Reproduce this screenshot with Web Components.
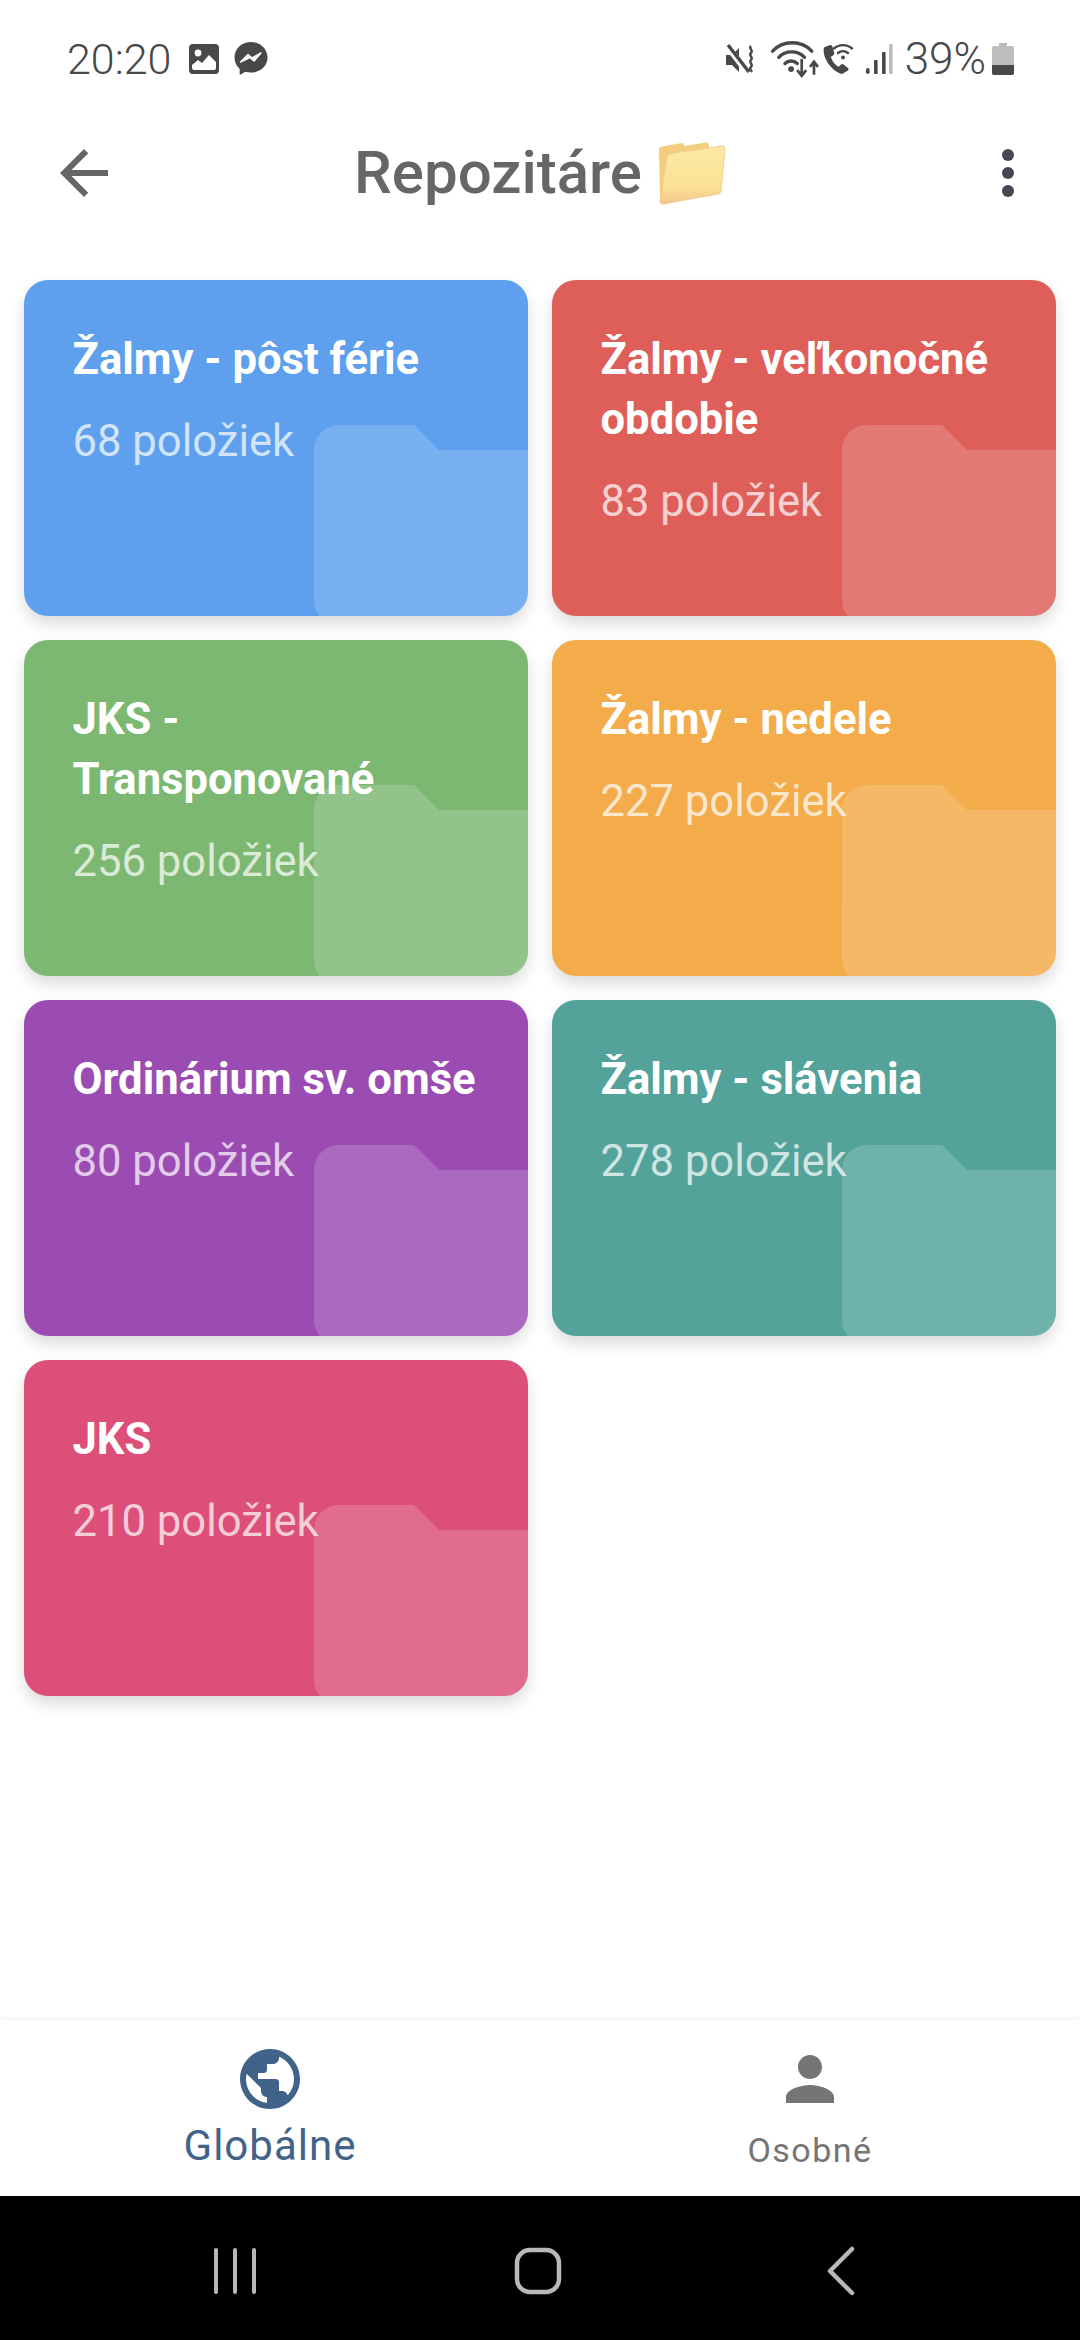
<!DOCTYPE html>
<html lang="sk">
<head>
<meta charset="utf-8">
<title>Repozitáre</title>
<style>
  html, body { margin: 0; padding: 0; background: #fff; }
  body { font-family: Roboto, "Noto Sans", sans-serif; width: 1080px; height: 2340px; overflow: hidden; }
  #app { display: flex; flex-direction: column; height: 2340px; }
</style>
</head>
<body>
<div id="app">
  <status-bar></status-bar>
  <app-bar>Repozitáre</app-bar>
  <repo-grid>
    <repo-card color="#5ea0ee" count="68 položiek">Žalmy - pôst férie</repo-card>
    <repo-card color="#de5f59" count="83 položiek">Žalmy - veľkonočné obdobie</repo-card>
    <repo-card color="#7db873" count="256 položiek">JKS - Transponované</repo-card>
    <repo-card color="#f4ab4a" count="227 položiek">Žalmy - nedele</repo-card>
    <repo-card color="#9b4cb3" count="80 položiek">Ordinárium sv. omše</repo-card>
    <repo-card color="#53a39a" count="278 položiek">Žalmy - slávenia</repo-card>
    <repo-card color="#dc4f79" count="210 položiek">JKS</repo-card>
  </repo-grid>
  <bottom-tabs>
    <tab-item icon="public" active>Globálne</tab-item>
    <tab-item icon="person">Osobné</tab-item>
  </bottom-tabs>
  <system-nav></system-nav>
</div>

<script>
// Material icon paths used in more than one place
const ICONS = {
  public: 'M12 2C6.48 2 2 6.48 2 12s4.48 10 10 10 10-4.48 10-10S17.52 2 12 2zm-1 17.93c-3.95-.49-7-3.85-7-7.93 0-.62.08-1.21.21-1.79L9 15v1c0 1.1.9 2 2 2v1.93zm6.9-2.54c-.26-.81-1-1.39-1.9-1.39h-1v-3c0-.55-.45-1-1-1H8v-2h2c.55 0 1-.45 1-1V7h2c1.1 0 2-.9 2-2v-.41c2.93 1.19 5 4.06 5 7.41 0 2.08-.8 3.97-2.1 5.39z',
  person: 'M12 12c2.21 0 4-1.79 4-4s-1.79-4-4-4-4 1.79-4 4 1.79 4 4 4zm0 2c-2.67 0-8 1.34-8 4v2h16v-2c0-2.66-5.33-4-8-4z',
  folder: 'M10 4H4c-1.1 0-1.99.9-1.99 2L2 18c0 1.1.9 2 2 2h16c1.1 0 2-.9 2-2V8c0-1.1-.9-2-2-2h-8l-2-2z'
};

class StatusBar extends HTMLElement {
  constructor() {
    super();
    this.attachShadow({ mode: 'open' });
    this.shadowRoot.innerHTML = `
      <style>
        :host { display: flex; align-items: center; justify-content: space-between; height: 82px; padding: 36px 66px 0 67px; box-sizing: border-box; color: #484848; flex: none; }
        .side { display: flex; align-items: center; }
        .time { font: 300 43px/46px Roboto, sans-serif; margin-right: 17px; }
        .pct { font: 300 44px/46px Roboto, sans-serif; margin: 0 6px 0 12px; }
        svg { display: block; flex: none; }
      </style>
      <div class="side">
        <span class="time">20:20</span>
        <svg width="32" height="32" viewBox="0 0 32 32"><rect x="1" y="1" width="30" height="30" rx="4" fill="#484848"/><circle cx="10" cy="10" r="3.4" fill="#fff"/><path d="M4 27v-5l6-5 4 3 7-8 7 7v6q0 2-2 2H6q-2 0-2-2z" fill="#fff"/></svg>
        <svg style="margin-left:14px" width="34" height="36" viewBox="0 0 34 36"><path d="M17 1C7.6 1 .5 7.8.5 16.6c0 4.700 2 8.600 5.200 11.300V34l5.600-3.200c1.800.5 3.700.8 5.700.8 9.400 0 16.500-6.400 16.500-15S26.400 1 17 1z" fill="#484848"/><path d="M6.500 21 14 13.500l4 3.500 9-5-7 8-4.200-3.500z" fill="#fff" stroke="#fff" stroke-width="1.500" stroke-linejoin="round"/></svg>
      </div>
      <div class="side">
        <svg width="32" height="32" viewBox="0 0 32 32"><path d="M1 11h6l7-7v24l-7-7H1z" fill="#484848" transform="translate(0 1)"/><path d="M2 3l20 26" stroke="#fff" stroke-width="6"/><path d="M3 2l21 27" stroke="#484848" stroke-width="3.400"/><path d="M26 3c-3 2.500 3 4.500 0 7s3 4.500 0 7 3 4.500 0 7 2 3 0 5" fill="none" stroke="#484848" stroke-width="2.400"/></svg>
        <svg style="margin-left:13px" width="50" height="38" viewBox="0 0 44 34"><g fill="none" stroke="#484848" stroke-width="3" stroke-linecap="round"><path d="M2 10C11 0 28 0 37 10"/><path d="M7.500 15.500c6-6.500 17-6.500 23 0"/><path d="M13 21c3-3 8-3 11 0"/></g><circle cx="18.500" cy="26" r="2.600" fill="#484848"/><path d="M28 17v14M24 27l4 5 4-5M39 31V20M35.500 24l3.500-4.500 3.500 4.500" fill="none" stroke="#484848" stroke-width="2.400"/></svg>
        <svg style="margin-left:1px" width="34" height="32" viewBox="0 0 34 32"><path d="M9 2 3 4.500C1 12 8 27 21 31l6-3.500c1-1 .5-2-.3-2.700l-4.200-3.300c-1-.8-2-.5-2.700.2l-2 2c-3-1-7-6-8-10l2.500-1.500c1-.6 1.200-1.700.8-2.700L11.500 3.500C11 2.500 10 1.700 9 2z" fill="#484848"/><g fill="none" stroke="#484848" stroke-width="2.400" stroke-linecap="round"><path d="M13 5.500c5-4.500 13-4.500 18 0"/><path d="M17 10c3-2.500 7-2.500 10 0"/></g><circle cx="22" cy="14.500" r="2" fill="#484848"/></svg>
        <svg style="margin-left:10px" width="28" height="32" viewBox="0 0 28 32"><rect x="1" y="25" width="3.600" height="6" rx="1.800" fill="#484848"/><rect x="9" y="17" width="3.600" height="14" rx="1" fill="#484848"/><rect x="17" y="9" width="3.600" height="22" rx="1" fill="#484848"/><rect x="24" y="1" width="3.600" height="30" rx="1" fill="#bdbdbd"/></svg>
        <span class="pct">39%</span>
        <svg width="22" height="32" viewBox="0 0 22 32"><path d="M7 0h8v3h5q2 0 2 2v25q0 2-2 2H2q-2 0-2-2V5q0-2 2-2h5z" fill="#bdbdbd"/><path d="M0 22h22v8q0 2-2 2H2q-2 0-2-2z" fill="#484848"/></svg>
      </div>
    `;
  }
}

class AppBar extends HTMLElement {
  constructor() {
    super();
    this.attachShadow({ mode: 'open' });
    this.shadowRoot.innerHTML = `
      <style>
        :host { display: grid; grid-template-columns: 120px 1fr 120px; align-items: center; height: 180px; flex: none; box-sizing: border-box; padding-top: 2px; }
        .back { margin-left: 48px; display: block; }
        .title { display: flex; align-items: center; justify-content: center; gap: 16px; font: 500 60px/70px Roboto, sans-serif; color: #666; }
        .dots { justify-self: end; margin-right: 66px; display: block; }
        svg { flex: none; }
      </style>
      <svg class="back" width="72" height="72" viewBox="0 0 24 24" fill="#666"><path d="M20 11H7.830l5.590-5.590L12 4l-8 8 8 8 1.410-1.410L7.830 13H20z"/></svg>
      <div class="title">
        <span><slot></slot></span>
        <svg width="68" height="66" viewBox="0 0 68 66">
          <defs>
            <linearGradient id="fr" x1="0" y1="0" x2="0" y2="1"><stop offset="0" stop-color="#fdeaa6"/><stop offset=".7" stop-color="#fae193"/><stop offset="1" stop-color="#f5c48c"/></linearGradient>
          </defs>
          <path d="M1 10q0-3 3-3.500L24 3q2-.3 2 2v1l22-3.500q3-.4 3 2.500l-1 50L5 64q-3 .5-3-3z" fill="#f4cd7c"/>
          <path d="M9 17q.3-3 3-3.400L64 6q3-.4 3 3l-4 42q-.3 2.500-3 3L5 64q-3 .5-3-2.500z" fill="url(#fr)" stroke="#f2cb92" stroke-width="1"/>
        </svg>
      </div>
      <svg class="dots" width="12" height="48" viewBox="0 0 12 48" fill="#444852"><circle cx="6" cy="6" r="6"/><circle cx="6" cy="24" r="6"/><circle cx="6" cy="42" r="6"/></svg>
    `;
  }
}

class RepoGrid extends HTMLElement {
  constructor() {
    super();
    this.attachShadow({ mode: 'open' });
    this.shadowRoot.innerHTML = `
      <style>
        :host { display: grid; grid-template-columns: 1fr 1fr; grid-auto-rows: 336px; gap: 24px; padding: 18px 24px 0; flex: 1; align-content: start; box-sizing: border-box; }
      </style>
      <slot></slot>
    `;
  }
}

class RepoCard extends HTMLElement {
  constructor() {
    super();
    this.attachShadow({ mode: 'open' });
    this.shadowRoot.innerHTML = `
      <style>
        :host { display: block; position: relative; overflow: hidden; border-radius: 24px; color: #fff; box-shadow: 0 8px 16px rgba(0,0,0,.14); padding: 50px 48px 48px 48.500px; box-sizing: border-box; background: var(--card-color); }
        .title { position: relative; font: 700 43.600px/60px Roboto, sans-serif; }
        .count { position: relative; margin-top: 27px; font: 400 43.600px/50px Roboto, sans-serif; color: rgba(255,255,255,.72); }
        svg { position: absolute; left: 265px; top: 95px; width: 300px; height: 300px; fill: rgba(255,255,255,.165); }
      </style>
      <svg viewBox="0 0 24 24"><path d="${ICONS.folder}"/></svg>
      <div class="title"><slot></slot></div>
      <div class="count"></div>
    `;
  }

  connectedCallback() {
    this.style.setProperty('--card-color', this.getAttribute('color'));
    this.shadowRoot.querySelector('.count').textContent = this.getAttribute('count');
  }
}

class BottomTabs extends HTMLElement {
  constructor() {
    super();
    this.attachShadow({ mode: 'open' });
    this.shadowRoot.innerHTML = `
      <style>
        :host { display: grid; grid-template-columns: 1fr 1fr; height: 176px; flex: none; box-sizing: border-box; background: #fff; box-shadow: 0 -2px 4px rgba(0,0,0,.05); position: relative; }
      </style>
      <slot></slot>
    `;
  }
}

class TabItem extends HTMLElement {
  constructor() {
    super();
    this.attachShadow({ mode: 'open' });
    this.shadowRoot.innerHTML = `
      <style>
        :host { display: flex; flex-direction: column; align-items: center; padding-top: 23px; box-sizing: border-box; color: #757575; font: 400 34px/46px Roboto, sans-serif; letter-spacing: 1.500px; }
        :host([active]) { color: #416389; font-size: 42px; letter-spacing: 1px; }
        svg { width: 72px; height: 72px; fill: currentColor; display: block; }
        .label { margin-top: 12px; }
        :host([active]) .label { margin-top: 8px; }
      </style>
      <svg viewBox="0 0 24 24"><path/></svg>
      <div class="label"><slot></slot></div>
    `;
  }

  connectedCallback() {
    this.shadowRoot.querySelector('path').setAttribute('d', ICONS[this.getAttribute('icon')]);
  }
}

class SystemNav extends HTMLElement {
  constructor() {
    super();
    this.attachShadow({ mode: 'open' });
    this.shadowRoot.innerHTML = `
      <style>
        :host { display: grid; grid-template-columns: 1fr 1fr 1fr; align-items: center; justify-items: center; height: 144px; flex: none; background: #000; padding: 6px 88px 0 83px; box-sizing: border-box; }
        svg { display: block; }
      </style>
      <svg width="48" height="48" viewBox="0 0 48 48" fill="#b8b8b8"><rect x="3" y="1" width="4" height="46" rx="2"/><rect x="22" y="1" width="4" height="46" rx="2"/><rect x="41" y="1" width="4" height="46" rx="2"/></svg>
      <svg width="48" height="48" viewBox="0 0 48 48" fill="none" stroke="#b8b8b8" stroke-width="4.500"><rect x="3" y="3" width="42" height="42" rx="13"/></svg>
      <svg width="28" height="50" viewBox="0 0 28 50" fill="none" stroke="#b8b8b8" stroke-width="4.500" stroke-linecap="round" stroke-linejoin="round"><path d="M25 3 3 25l22 22"/></svg>
    `;
  }
}

customElements.define('status-bar', StatusBar);
customElements.define('app-bar', AppBar);
customElements.define('repo-grid', RepoGrid);
customElements.define('repo-card', RepoCard);
customElements.define('bottom-tabs', BottomTabs);
customElements.define('tab-item', TabItem);
customElements.define('system-nav', SystemNav);
</script>
</body>
</html>
